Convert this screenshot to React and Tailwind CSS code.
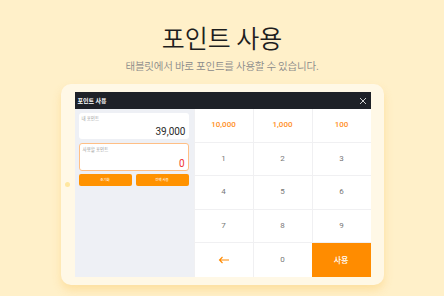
import React from "react";

const font = { fontFamily: '"Noto Sans CJK KR", "Noto Sans", sans-serif' };

function Key({ children, className = "" }) {
  return (
    <div className={"flex items-center justify-center border-b border-l border-[#f0f0f2] " + className}>
      {children}
    </div>
  );
}

export default function App() {
  return (
    <div
      className="w-[444px] h-[296px] bg-[#fff0c9] flex flex-col items-center overflow-hidden"
      style={font}
    >
      <div className="mt-[20px] h-[34px] flex items-center text-[25px] font-[350] leading-none text-[#1e1e1e]">
        포인트 사용
      </div>
      <div className="mt-[4px] h-[16px] flex items-center text-[10.5px] font-[350] leading-none text-[#8a8a8a] tracking-[-0.2px]">
        태블릿에서 바로 포인트를 사용할 수 있습니다.
      </div>
      <div className="mt-[10px] w-[323px] h-[201px] rounded-[10px] bg-[#fff8e6] flex items-center shadow-[0_5px_8px_rgba(250,205,110,0.45)]">
        <div className="w-[14px] flex justify-center">
          <div className="w-[5px] h-[5px] rounded-full bg-[#ffe7a0]" />
        </div>
        <div className="w-[296px] h-[185px] flex flex-col bg-white">
          <div className="h-[17px] bg-[#1e2128] flex items-center justify-between pl-[3px] pr-[4px]">
            <span className="text-[6px] font-bold text-white leading-none">포인트 사용</span>
            <svg width="8" height="8" viewBox="0 0 8 8" className="text-[#d0d0d0]">
              <path d="M1 1L7 7M7 1L1 7" stroke="currentColor" strokeWidth="1" />
            </svg>
          </div>
          <div className="flex flex-1">
            <div className="w-[119px] bg-[#eef0f5] pt-[4px] pl-[4px] pr-[5px] flex flex-col">
              <div className="h-[26px] bg-white rounded-[3px] px-[3px] pt-[3px] flex flex-col">
                <span className="text-[4.5px] text-[#999] leading-none">내 포인트</span>
                <span className="text-right text-[10px] text-[#2a2a2a] leading-none mt-[6px] font-['Roboto',sans-serif]">39,000</span>
              </div>
              <div className="mt-[4px] h-[28px] bg-white rounded-[3px] border border-[#ffbf85] px-[3px] pt-[3px] flex flex-col">
                <span className="text-[4.5px] text-[#999] leading-none">사용할 포인트</span>
                <span className="text-right text-[10px] text-[#f03030] leading-none mt-[7px] font-['Roboto',sans-serif]">0</span>
              </div>
              <div className="mt-[3px] h-[12px] flex gap-[4px]">
                <div className="flex-1 rounded-[2px] bg-[#ff9200] flex items-center justify-center text-[3.5px] text-white leading-none">초기화</div>
                <div className="flex-1 rounded-[2px] bg-[#ff9200] flex items-center justify-center text-[3.5px] text-white leading-none">전액 사용</div>
              </div>
            </div>
            <div className="flex-1 grid grid-cols-3 grid-rows-5 text-[8px] leading-none text-[#777] font-['Roboto',sans-serif]">
              <Key className="text-[#ff8f1f] font-medium">10,000</Key>
              <Key className="text-[#ff8f1f] font-medium">1,000</Key>
              <Key className="text-[#ff8f1f] font-medium">100</Key>
              <Key>1</Key>
              <Key>2</Key>
              <Key>3</Key>
              <Key>4</Key>
              <Key>5</Key>
              <Key>6</Key>
              <Key>7</Key>
              <Key>8</Key>
              <Key>9</Key>
              <Key className="border-b-0">
                <svg width="12" height="8" viewBox="0 0 12 8" className="text-[#ff8a00]">
                  <path d="M11 4H1.5M4.5 1L1.5 4L4.5 7" stroke="currentColor" strokeWidth="1.1" fill="none" />
                </svg>
              </Key>
              <Key className="border-b-0">0</Key>
              <div className="bg-[#ff8c00] flex items-center justify-center text-white text-[8px] font-medium font-['Noto_Sans_CJK_KR',sans-serif]">사용</div>
            </div>
          </div>
        </div>
      </div>
    </div>
  );
}
